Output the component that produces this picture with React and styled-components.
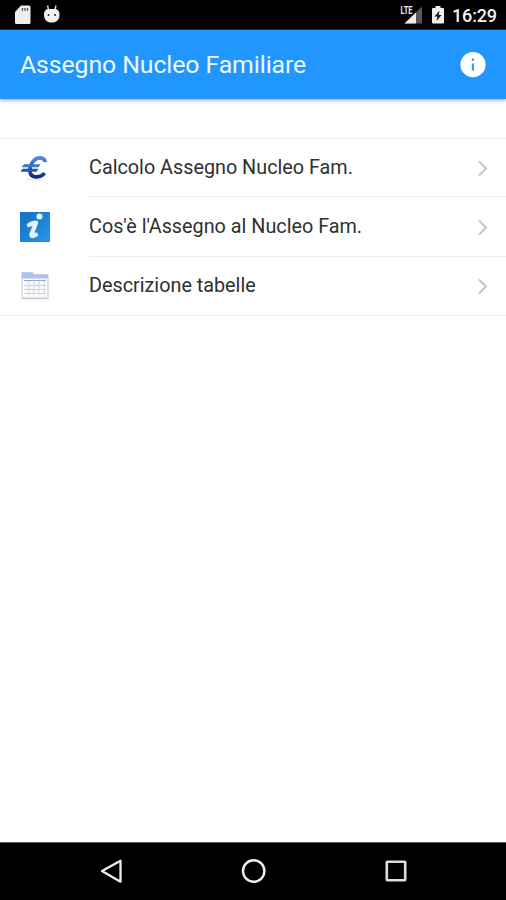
import styled, { createGlobalStyle } from "styled-components";

const GlobalStyle = createGlobalStyle`
  body {
    margin: 0;
    background: #fff;
    font-family: Roboto, sans-serif;
  }
`;

const Screen = styled.div`
  width: 506px;
  height: 900px;
  display: flex;
  flex-direction: column;
  overflow: hidden;
  background: #fff;
`;

const StatusBar = styled.div`
  height: 30px;
  box-sizing: border-box;
  padding: 0 9px 0 14px;
  display: flex;
  align-items: center;
  justify-content: space-between;
  background: #000;
  border-bottom: 1px solid #0b3357;
`;

const StatusGroup = styled.div`
  display: flex;
  align-items: center;
  gap: ${(props) => props.$gap}px;
`;

const Clock = styled.span`
  width: 45px;
  margin-left: -1px;
  padding-top: 2px;
  font-size: 18px;
  font-weight: 500;
  line-height: 20px;
  letter-spacing: -0.15px;
  color: #f2f2f2;
`;

const AppBar = styled.header`
  height: 69px;
  box-sizing: border-box;
  padding: 0 20px 0 20px;
  display: flex;
  align-items: center;
  justify-content: space-between;
  background: #2196ff;
  box-shadow: 0 1px 4px rgba(70, 30, 40, 0.5);
`;

const Title = styled.h1`
  margin: 0;
  font-size: 24.8px;
  font-weight: 400;
  line-height: 30px;
  letter-spacing: -0.08px;
  white-space: nowrap;
  color: #eef8ff;
`;

const List = styled.ul`
  margin: 39px 0 0;
  padding: 0;
  list-style: none;
  border-top: 1px solid #eee;
  border-bottom: 1px solid #eee;
`;

const Item = styled.li`
  height: ${(props) => props.$height}px;
  display: flex;
  cursor: pointer;
`;

const ItemIcon = styled.div`
  width: 89px;
  box-sizing: border-box;
  padding-left: 19px;
  display: flex;
  align-items: center;
`;

const ItemBody = styled.div`
  flex: 1;
  display: flex;
  align-items: center;
  justify-content: space-between;
  padding-right: 16px;
  border-bottom: ${(props) => (props.$last ? "none" : "1px solid #eee")};
`;

const Label = styled.span`
  font-size: 19.8px;
  line-height: 26px;
  white-space: nowrap;
  color: #303030;
`;

const NavBar = styled.nav`
  height: 58px;
  box-sizing: border-box;
  margin-top: auto;
  padding: 0 97px 2px 98px;
  display: flex;
  align-items: center;
  justify-content: space-between;
  background: #000;
  border-top: 1px solid #555;
`;

const SdCardIcon = () => (
  <svg width="18" height="22" viewBox="0 0 18 22">
    <path d="M7 1.500h8q1.500 0 1.500 1.500v15.500q0 1.500-1.500 1.500H2.500q-1.500 0-1.500-1.500V8z" fill="#eee" />
    <path d="M8.500 4v3M11 4v3M13.500 4v3" stroke="#555" strokeWidth="1.300" />
  </svg>
);

const BugDroidIcon = () => (
  <svg width="18" height="20" viewBox="0 0 18 20">
    <path d="M4.500 .500l1 4M13 .500l-1 4" stroke="#ddd" strokeWidth="1.400" />
    <path d="M1 9.500q0-5.500 5-5.500h5.500q5 0 5 5.500c0 5.500-3 8-7.750 8s-7.750-2.500-7.750-8z" fill="#f2f2f2" />
    <circle cx="5.500" cy="10" r="1" fill="#222" />
    <circle cx="12" cy="10" r="1" fill="#222" />
  </svg>
);

const SignalIcon = () => (
  <svg width="23" height="20" viewBox="0 0 23 20">
    <path d="M22 1.500v17H4.500z" fill="#57575b" />
    <path d="M16 7.500v11H4.500z" fill="#eee" />
    <text
      x="0.500"
      y="8.500"
      fontFamily="Roboto, sans-serif"
      fontSize="10"
      fontWeight="700"
      textLength="12"
      lengthAdjust="spacingAndGlyphs"
      fill="#f0f0f0"
      stroke="#000"
      strokeWidth="1"
      paintOrder="stroke"
    >
      LTE
    </text>
  </svg>
);

const BatteryIcon = () => (
  <svg width="12" height="20" viewBox="0 0 12 20">
    <path d="M3.500 1h5v2H11q1 0 1 1v13.500q0 1-1 1H1q-1 0-1-1V4q0-1 1-1h2.500z" fill="#f0f0f0" />
    <path d="M7.500 5.500L2.500 11.500h3l-1 4.500 5-6h-3z" fill="#111" />
  </svg>
);

const InfoIcon = () => (
  <svg width="26" height="26" viewBox="0 0 26 26">
    <circle cx="13" cy="12.700" r="12.600" fill="#fff" />
    <rect x="11.800" y="6.500" width="2.300" height="2.300" fill="#369cf5" />
    <rect x="11.800" y="11.500" width="2.300" height="7" fill="#369cf5" />
  </svg>
);

const EuroIcon = () => (
  <svg width="32" height="32" viewBox="0 0 32 32">
    <defs>
      <linearGradient id="euro" x1="0" y1="0" x2="0" y2="1">
        <stop offset="0" stopColor="#4d8ad6" />
        <stop offset="1" stopColor="#102f83" />
      </linearGradient>
    </defs>
    <ellipse cx="15" cy="27.300" rx="9" ry="1.200" fill="#e6e8ec" />
    <path
      d="M26.500 10C25 4.500 18 4.500 14 9.500C9.500 15.500 9.500 24.500 16.500 24.800C20.500 25 23.500 24 25.500 21"
      fill="none"
      stroke="url(#euro)"
      strokeWidth="3.700"
    />
    <path d="M5 12.300h16.500l-2 3H2.500z" fill="#3b76c5" />
    <path d="M3.500 16.700h16l-2 3H1.500z" fill="#2455a5" />
  </svg>
);

const AboutIcon = () => (
  <svg width="32" height="32" viewBox="0 0 32 32">
    <defs>
      <linearGradient id="about" x1="0" y1="0" x2="1" y2="1">
        <stop offset="0" stopColor="#1270c4" />
        <stop offset="1" stopColor="#2b95e6" />
      </linearGradient>
    </defs>
    <rect x="1" y="1" width="30" height="30" fill="url(#about)" />
    <circle cx="20.500" cy="5.500" r="3" fill="#eaf8ff" />
    <path
      d="M10 14q3-2 7-2.300L12.500 23.500q-.5 3 4.500 .200"
      fill="none"
      stroke="#e0f3ff"
      strokeWidth="4.400"
      strokeLinejoin="round"
      strokeLinecap="round"
    />
  </svg>
);

const TableIcon = () => (
  <svg width="32" height="32" viewBox="0 0 32 32">
    <path d="M3 2.500h10l2 2h14v23.500h-26z" fill="#fafbfe" stroke="#cfd1d6" strokeWidth="1.200" />
    <path d="M3 2.500h10l2 2.500h14v3.500h-26z" fill="#a9c3f2" />
    <path d="M5 10.500h22" stroke="#93a3c9" strokeWidth="1" />
    <path d="M5 15.500h22M5 19.500h22M5 23.500h22" stroke="#cdd2df" strokeWidth="1" />
    <path d="M10 10.500v14M15 10.500v14M20 10.500v14M25 10.500v14" stroke="#cbd3e6" strokeWidth="1" />
    <path d="M3.500 28.500h25" stroke="#c6c7ca" strokeWidth="1.200" />
  </svg>
);

const Chevron = () => (
  <svg width="14" height="18" viewBox="0 0 14 18">
    <path d="M3 2.500l7 7-7 7" fill="none" stroke="#c4c4c4" strokeWidth="2" />
  </svg>
);

const BackIcon = () => (
  <svg width="26" height="26" viewBox="0 0 26 26">
    <path d="M22.500 2.700v21L4 13z" fill="none" stroke="#eee" strokeWidth="2.300" strokeLinejoin="round" />
  </svg>
);

const HomeIcon = () => (
  <svg width="26" height="26" viewBox="0 0 26 26">
    <circle cx="12.700" cy="13" r="10.700" fill="none" stroke="#eee" strokeWidth="2.400" />
  </svg>
);

const RecentsIcon = () => (
  <svg width="26" height="26" viewBox="0 0 26 26">
    <rect x="3.800" y="3.800" width="18.400" height="18.400" rx="0.500" fill="none" stroke="#ddd" strokeWidth="2.600" />
  </svg>
);

const items = [
  { label: "Calcolo Assegno Nucleo Fam.", icon: EuroIcon, height: 58 },
  { label: "Cos'è l'Assegno al Nucleo Fam.", icon: AboutIcon, height: 60 },
  { label: "Descrizione tabelle", icon: TableIcon, height: 58 },
];

const App = () => {
  return (
    <>
      <GlobalStyle />
      <Screen>
        <StatusBar>
          <StatusGroup $gap={11}>
            <SdCardIcon />
            <BugDroidIcon />
          </StatusGroup>
          <StatusGroup $gap={9}>
            <SignalIcon />
            <BatteryIcon />
            <Clock>16:29</Clock>
          </StatusGroup>
        </StatusBar>
        <AppBar>
          <Title>Assegno Nucleo Familiare</Title>
          <InfoIcon />
        </AppBar>
        <List>
          {items.map(({ label, icon: Icon, height }, index) => (
            <Item key={label} $height={height}>
              <ItemIcon>
                <Icon />
              </ItemIcon>
              <ItemBody $last={index === items.length - 1}>
                <Label>{label}</Label>
                <Chevron />
              </ItemBody>
            </Item>
          ))}
        </List>
        <NavBar>
          <BackIcon />
          <HomeIcon />
          <RecentsIcon />
        </NavBar>
      </Screen>
    </>
  );
};

export default App;
